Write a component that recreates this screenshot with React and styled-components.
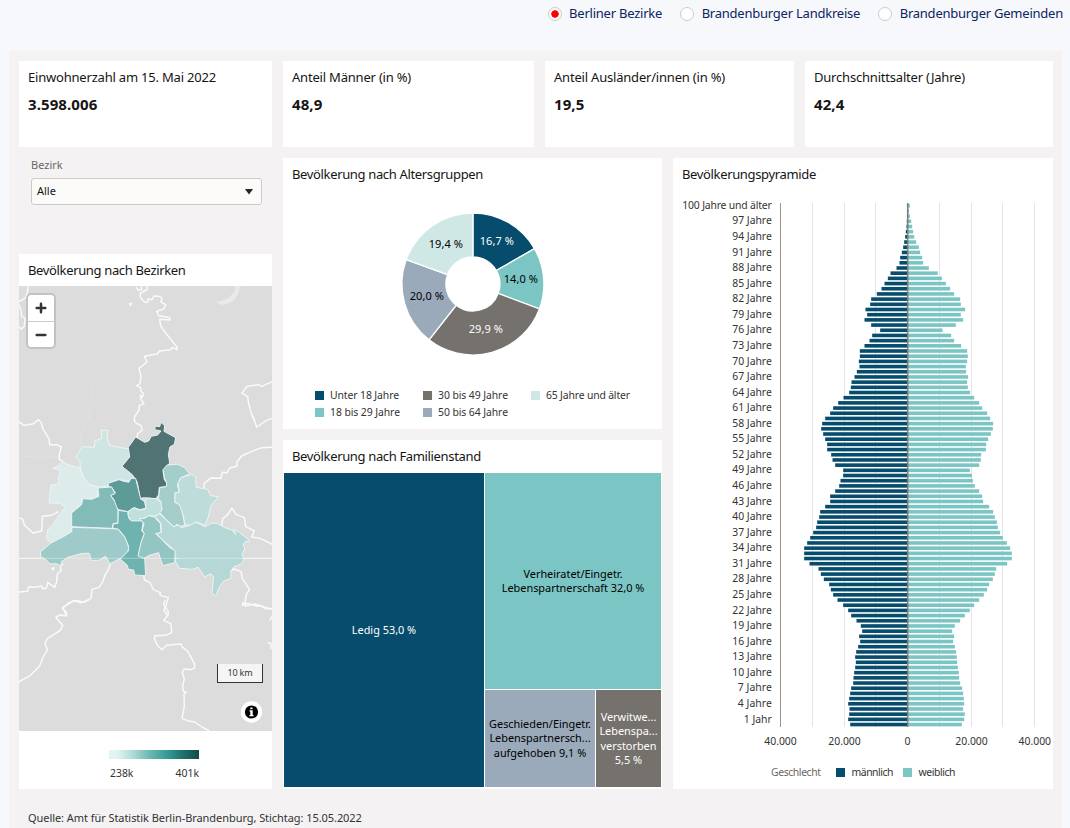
import React from "react";
import styled, { createGlobalStyle } from "styled-components";

const Global = createGlobalStyle`
  * { box-sizing: border-box; }
  html, body { margin: 0; height: 828px; overflow: hidden; }
  body { background: #f6f8fc; font-family: "Noto Sans", "Open Sans", sans-serif; color: #161513; }
`;

const navy = "#064c6c";
const teal = "#7bc6c4";
const grey = "#75716c";
const steel = "#9aaaba";
const mint = "#d0e8e5";

const Page = styled.div`
  height: 828px;
  width: 1070px;
  overflow: hidden;
`;

const Filters = styled.nav`
  height: 51px;
  display: flex;
  justify-content: flex-end;
  align-items: flex-start;
  padding: 3px 7px 0 0;
`;

const Option = styled.label`
  display: flex;
  align-items: center;
  height: 20px;
  margin-left: ${(p) => p.$gap || 0}px;
  font-size: 13px;
  letter-spacing: -0.23px;
  color: #0c2461;
  white-space: nowrap;
`;

const Radio = styled.span`
  width: 14px;
  height: 14px;
  margin: 2px 7.5px 0 0;
  border-radius: 50%;
  border: 1px solid #cbcbcb;
  background: ${(p) => (p.$on ? "radial-gradient(circle, #f00 0 3.4px, #fff 4px)" : "#fff")};
`;

const Board = styled.main`
  margin-left: 9px;
  width: 1053px;
  height: 777px;
  padding: 10px 9px 0 10px;
  background: #f4f2f3;
`;

const Kpis = styled.div`
  display: grid;
  grid-template-columns: 253px 251px 249px 248px;
  column-gap: 11px;
  height: 86px;
`;

const Kpi = styled.section`
  background: #fff;
  padding: 6px 9px;
`;

const Title = styled.h2`
  margin: 0;
  font-size: 13px;
  line-height: 20px;
  font-weight: 400;
  white-space: nowrap;
  letter-spacing: -0.2px;
`;

const Value = styled.div`
  margin-top: 7px;
  font-size: 15px;
  line-height: 20px;
  font-weight: 700;
  letter-spacing: 0.1px;
`;

const Columns = styled.div`
  display: grid;
  grid-template-columns: 253px 379px 380px;
  column-gap: 11px;
  margin-top: 11px;
  height: 631px;
`;

const Column = styled.div`
  display: flex;
  flex-direction: column;
`;

const Panel = styled.section`
  background: #fff;
  height: ${(p) => p.$h}px;
  padding-top: 6px;
  margin-top: ${(p) => p.$gap || 0}px;
`;

const PanelTitle = styled(Title)`
  padding-left: 9px;
  height: ${(p) => p.$h || 26}px;
  letter-spacing: -0.35px;
`;

const Field = styled.div`
  height: 96px;
  padding: 0 10px 0 12px;
`;

const FieldLabel = styled.div`
  font-size: 11px;
  height: 15px;
  line-height: 13px;
  color: #6b6763;
`;

const Select = styled.div`
  display: flex;
  align-items: center;
  justify-content: space-between;
  margin-top: 5px;
  height: 27px;
  padding: 0 8px 2px 5px;
  border: 1px solid #cdcbc6;
  border-radius: 3px;
  background: #fcfbfa;
  font-size: 11px;
`;

const Caret = styled.svg`
  margin-top: 2px;
`;

const MapArea = styled.div`
  position: relative;
  height: 445px;
  background: #dcdcdc;
  overflow: hidden;
`;

const ZoomBox = styled.div`
  position: absolute;
  left: 7px;
  top: 7px;
  width: 30px;
  height: 56px;
  border: 2px solid #c2c2c2;
  border-radius: 5px;
  background: #fff;
`;

const ZoomButton = styled.div`
  height: 26px;
  display: flex;
  align-items: center;
  justify-content: center;
  & + & { border-top: 1px solid #ccc; }
`;

const Scale = styled.div`
  position: absolute;
  left: 198px;
  top: 378px;
  width: 46px;
  height: 19px;
  border: 1px solid #333;
  border-top: 0;
  background: #f5f5f5;
  color: #333;
  font-size: 9px;
  letter-spacing: -0.2px;
  line-height: 18px;
  text-align: center;
`;

const Info = styled.div`
  position: absolute;
  left: 222px;
  top: 415px;
  width: 21px;
  height: 22px;
`;

const Ramp = styled.div`
  width: 90px;
  margin: 19px 0 0 90px;
  font-size: 10.4px;
  line-height: 14px;
  color: #333;
`;

const RampBar = styled.div`
  height: 9px;
  background: linear-gradient(90deg, #e2f5f5 0 8%, #b3ddd9 25%, #6db8b3 45%, #319895 66%, #217471 80%, #144a4b);
`;

const RampLabels = styled.div`
  display: flex;
  justify-content: space-between;
  margin: 7px 0 0 1px;
`;

const Tree = styled.div`
  display: flex;
  gap: 1px;
  height: 314px;
  margin: 1px 1px 0;
`;

const TreeStack = styled.div`
  display: grid;
  grid-template: 216px 97px / 110px 65px;
  gap: 1px;
`;

const Tile = styled.div`
  display: flex;
  flex-direction: column;
  align-items: center;
  justify-content: center;
  background: ${(p) => p.$bg};
  color: ${(p) => p.$fg || "#000"};
  grid-column: ${(p) => (p.$wide ? "1 / 3" : "auto")};
  width: ${(p) => (p.$w ? p.$w + "px" : "auto")};
  font-size: 10.9px;
  line-height: 14.5px;
  white-space: nowrap;
`;

const Source = styled.footer`
  margin: 20px 0 0 9px;
  font-size: 11px;
  letter-spacing: -0.06px;
  line-height: 18px;
  color: #333;
  white-space: nowrap;
`;

const Svg = styled.svg`
  display: block;
  font-size: ${(p) => p.$size || 10}px;
`;

const slices = [
  { share: 16.7, label: "16,7 %", color: navy, fg: "#fff", x: 213, y: 87 },
  { share: 14.0, label: "14,0 %", color: teal, fg: "#000", x: 237, y: 125 },
  { share: 29.9, label: "29,9 %", color: grey, fg: "#fff", x: 202, y: 175 },
  { share: 20.0, label: "20,0 %", color: steel, fg: "#000", x: 143, y: 142 },
  { share: 19.4, label: "19,4 %", color: mint, fg: "#000", x: 162, y: 90 },
];

const groups = [
  { x: 32, y: 233, text: "Unter 18 Jahre", color: navy, w: 69 },
  { x: 32, y: 250, text: "18 bis 29 Jahre", color: teal, w: 70 },
  { x: 140, y: 233, text: "30 bis 49 Jahre", color: grey, w: 70 },
  { x: 140, y: 250, text: "50 bis 64 Jahre", color: steel, w: 70 },
  { x: 248, y: 233, text: "65 Jahre und älter", color: mint, w: 84 },
];

function Donut() {
  const cx = 189.9, cy = 126, R = 71, r = 27;
  const pt = (rad, a) => `${cx + rad * Math.sin(a)} ${cy - rad * Math.cos(a)}`;
  let sum = 0;
  return (
    <Svg width="379" height="239" viewBox="0 32 379 239" $size={11}>
      {slices.map((s) => {
        const a = (sum / 100) * 2 * Math.PI;
        sum += s.share;
        const b = (sum / 100) * 2 * Math.PI;
        return (
          <path key={s.label} fill={s.color} stroke="#fff" strokeWidth="1.3"
            d={`M${pt(R, a)}A${R} ${R} 0 0 1 ${pt(R, b)}L${pt(r, b)}A${r} ${r} 0 0 0 ${pt(r, a)}Z`} />
        );
      })}
      {slices.map((s) => (
        <text key={s.label} x={s.x + 0.8} y={s.y} fill={s.fg} textAnchor="middle" textLength="34">{s.label}</text>
      ))}
      {groups.map((g) => (
        <g key={g.text}>
          <rect x={g.x} y={g.y} width="9" height="9" fill={g.color} />
          <text x={g.x + 15} y={g.y + 8} fontSize="10.4" fill="#333" textLength={g.w}>{g.text}</text>
        </g>
      ))}
    </Svg>
  );
}

// Bar lengths from age 100 down to 0, in units of 105 residents.
const men = [1,1,1.5,2,3,5,7,10,13,17,22,24,33,51,59,69,78,92,109,112,126,121,129,109,82,106,114,129,143,143,146,144,152,159,168,170,175,192,208,223,232,247,256,259,253,247,241,241,229,225,217,193,193,201,205,217,232,232,247,262,265,271,274,283,292,301,310,310,310,294,267,260,251,235,230,223,210,193,178,169,153,140,136,145,142,148,154,157,155,157,160,162,163,169,172,175,178,174,175,178,172];
const women = [7,4,7,11,14,17,20,26,34,38,44,47,64,91,103,115,128,140,158,160,173,160,167,145,105,131,140,161,179,181,179,175,176,182,179,181,188,200,215,224,239,248,257,256,250,242,236,235,221,220,215,187,193,196,202,215,224,227,245,257,262,268,271,278,286,298,308,313,313,299,266,262,256,245,239,229,215,200,187,172,158,142,134,140,137,142,146,148,149,151,154,155,158,164,167,169,170,167,172,170,163];

function Pyramid() {
  const zero = 234.5, step = 5.188;
  const mid = (i) => 45.1 + step * (i + 0.5);
  return (
    <Svg width="380" height="598" viewBox="0 33 380 598" $size={10.4} fill="#333">
      {[139.5, 171.5, 202.5, 266.5, 298.5, 329.5, 361.5].map((x) => (
        <path key={x} d={`M${x} 45V569`} stroke="#e4e5ea" />
      ))}
      <path d="M107.5 45V569" stroke="#969594" />
      {men.map((m, i) => (
        <g key={i}>
          <rect x={zero - m / 3} y={mid(i) - 1.75} width={m / 3} height="3.6" fill={navy} />
          <rect x={zero} y={mid(i) - 1.75} width={women[i] / 3} height="3.6" fill={teal} />
        </g>
      ))}
      <path d="M234.7 45V569" stroke="#75716c" strokeOpacity=".85" strokeWidth="1.6" />
      {men.map((_, i) => {
        if (i % 3) return null;
        const age = 100 - i;
        const text = age === 100 ? "100 Jahre und älter" : age === 1 ? "1 Jahr" : `${age} Jahre`;
        const w = age === 100 ? 89.5 : age === 1 ? 28 : age > 9 ? 39.5 : 34;
        return <text key={i} x="98.8" y={Math.round(mid(i) + 3.2)} textAnchor="end" textLength={w}>{text}</text>;
      })}
      {[["40.000", 107.5], ["20.000", 171.5], ["0", 234.5], ["20.000", 298.5], ["40.000", 361.8]].map(([t, x]) => (
        <text key={x} x={x} y="587" textAnchor="middle" textLength={t === "0" ? 6 : 32.5}>{t}</text>
      ))}
      <text x="98" y="618" fill="#6b6763" textLength="50">Geschlecht</text>
      <rect x="163" y="610" width="9" height="9" fill={navy} />
      <text x="178.5" y="618" textLength="42">männlich</text>
      <rect x="230" y="610" width="9" height="9" fill={teal} />
      <text x="245.5" y="618" textLength="37">weiblich</text>
    </Svg>
  );
}

const districts = [
  ["#ddeceb", "M112 162L130 152 141 140 162 150 196 158 202 182 222 208 248 216 248 244 231 252 202 251 199 268 171 293 170 348 158 362 144 364 131 379 106 383 94 370 99 342 114 330 133 299 151 276 134 265 102 264 108 210 130 207 131 186 136 166 120 161Z"],
  ["#cfe5e3", "M183 126L202 95 238 97 240 77 260 71 258 45 279 46 276 66 284 91 305 95 329 100 342 101 345 126 336 142 325 154 349 172 362 189 343 199 312 194 292 200 280 213 250 216 222 208 204 184 196 158 195 140Z"],
  ["#507473", "M340 97L362 66 389 82 401 78 409 64 428 60 438 48 419 44 421 33 434 35 438 22 449 32 447 49 482 68 478 88 465 96 460 118 464 144 444 168 448 194 456 205 454 215 433 217 431 239 422 252 388 248 375 250 370 218 366 200 352 179 321 154 344 126Z"],
  ["#5c9b98", "M280 205L312 194 326 199 341 202 349 190 362 190 370 223 377 252 389 260 393 280 374 284 357 278 338 290 311 284 300 274 298 256 287 241 301 233 289 216 280 215Z"],
  ["#82bbb8", "M170 294L200 269 203 251 230 253 252 244 249 219 290 216 300 236 287 241 299 260 309 286 309 323 294 326 292 340 239 338 170 335Z"],
  ["#9ecbc9", "M171 337L237 339 309 342 332 370 342 401 336 414 321 429 305 436 285 446 272 424 251 436 229 436 223 415 202 415 159 427 139 440 139 452 123 446 105 447 92 433 78 426 76 411 108 384 145 365 170 350Z"],
  ["#6fb3b1", "M310 286L338 290 342 311 354 318 375 309 384 324 380 348 388 355 378 384 371 421 389 428 392 482 359 480 356 465 340 463 337 451 316 432 340 408 341 394 329 365 310 342 294 340 294 327 309 325Z"],
  ["#c1dfdc", "M341 288L357 278 375 285 393 281 390 260 397 249 423 251 439 263 440 287 434 299 447 309 428 299 418 303 402 302 387 309 378 318 348 317 339 301Z"],
  ["#93c5c3", "M374 311L388 310 402 302 419 307 436 326 438 353 422 356 443 376 464 398 482 407 479 443 444 452 436 431 431 413 403 421 387 430 369 423 378 383 388 356 382 345 387 325Z"],
  ["#a4cecc", "M444 164L456 150 488 148 509 158 524 176 496 189 487 211 493 232 480 233 480 263 496 269 504 300 509 330 498 334 486 328 477 335 455 316 434 292 441 286 438 260 430 251 434 219 454 214 455 204 448 187Z"],
  ["#bddcda", "M489 203L499 188 530 178 542 187 544 217 578 223 587 242 611 245 588 272 580 306 570 331 543 320 532 332 510 329 505 302 494 270 480 261 480 234 493 231Z"],
  ["#b5d8d6", "M419 303L435 297 475 335 490 330 499 338 522 332 543 322 570 335 590 325 606 325 629 338 650 345 663 359 655 343 673 352 705 378 691 380 684 391 690 401 681 417 686 435 680 446 656 456 647 469 648 490 625 499 612 519 602 544 591 534 596 485 587 476 569 486 550 457 533 463 494 460 481 440 480 407 441 373 424 356 440 352 437 324Z"],
];

const northBorders = [
  "M40 108L36 132 30 145 10 155M12 164L18 180 20 200 30 204 28 229 19 238 12 230",
  "M364 111L370 121 379 119 380 108M395 108L398 117 383 126 376 130 376 142 389 157 399 157 398 147 411 149 417 138 433 139 441 144 438 156 452 164 446 177 425 184 431 197 464 203 466 210 434 208 437 228 450 247 474 276 486 291 487 299 472 292 467 299 434 303 427 312 388 319 396 336 372 355 378 380 375 401 365 407 377 413 378 424 386 431 382 442 376 435 377 447 387 460 373 467 372 480 359 500 358 512 364 520 378 526 382 540 367 552 366 567",
  "M343 159L346 166 351 158",
  "M772 395L740 409 730 404 697 409 681 429 698 440 700 457 710 494 719 512",
];

const southBorders = [
  "M11 20L27 31 56 26 70 14 79 23 82 38 92 55 102 71 104 89 124 89 139 96 133 119 133 134 145 139",
  "M11 308L23 312 28 330 54 354 80 348 82 304 110 301 130 290",
  "M712 0L725 36 755 16 772 10M566 219L568 205 587 189 618 190 622 172 636 173 644 159 665 154 666 141 680 123 710 109 740 98 772 97",
  "M620 331L623 311 637 300 651 279 664 299 688 308 692 334 718 348 710 366 735 370 772 388",
  "M286 447L280 464 270 480 264 499 252 517 231 523 228 550 200 563 175 557 144 578 153 599",
  "M386 482L389 495 406 503 414 523 436 533 435 541 460 548 452 575 447 586 457 600",
  "M645 468L658 462 678 470 682 490 704 524 694 538 690 563 682 570 700 565 725 574 735 572 752 581 772 581",
  "M11 531L37 529 41 515 59 517 81 513 82 521 94 519 98 502 119 517 125 500 127 478 139 466 136 449 145 448M109 461L117 458 113 466",
];

const bottomBorders = [
  "M222 0L205 7 187 1 163 8 142 24 155 38 154 48 135 45 122 52 143 76 136 91 98 115 90 129 97 150 83 174 74 198 44 228 10 246",
  "M450 0L446 14 460 35 459 46 446 61 468 71 470 98 452 106 420 107 418 115 427 136 441 149 455 136 499 132 501 140 519 155 539 193 539 204 527 209 507 207 502 217 508 237 503 259 505 274 513 276 507 283 508 320 501 355 517 362 539 366 561 381 582 392",
  "M681 8L692 18 720 12 740 18 750 22 772 27M758 129L768 130 768 148M764 62L772 49",
];

function BerlinMap() {
  return (
    <Svg width="253" height="445" fill="none" stroke="#fafafa" strokeWidth="4.4" strokeLinejoin="round">
      <g transform="translate(-4 -36) scale(.33333)">
        {northBorders.map((d) => <path key={d} d={d} />)}
        <path d="M602 155L622 165 653 155 669 134 676 109 662 108 656 128 640 144 620 153Z" fill="#e9e9e9" stroke="none" />
        <path d="M233 408L229 455 223 475 225 510" stroke="#e4e4e4" strokeWidth="2" />
      </g>
      <g transform="translate(-4 129) scale(.33333)">
        {southBorders.map((d) => <path key={d} d={d} />)}
        <path d="M225 2L207 27 195 71 196 94M12 121L60 128 130 126" stroke="#e4e4e4" strokeWidth="2" />
        {districts.map(([color, d]) => <path key={color} d={d} fill={color} stroke="#edf5f4" strokeWidth="2.8" />)}
        <path d="M12 430H78M485 430H490M687 430H772" strokeWidth="3" />
        <path d="M80 430H685" stroke="#fff" strokeOpacity=".35" strokeWidth="3" />
      </g>
      <g transform="translate(-4 314) scale(.33333)">
        {bottomBorders.map((d) => <path key={d} d={d} />)}
      </g>
    </Svg>
  );
}

const kpis = [
  ["Einwohnerzahl am 15. Mai 2022", "3.598.006"],
  ["Anteil Männer (in %)", "48,9"],
  ["Anteil Ausländer/innen (in %)", "19,5"],
  ["Durchschnittsalter (Jahre)", "42,4"],
];

export default function App() {
  return (
    <Page>
      <Global />
      <Filters>
        <Option><Radio $on />Berliner Bezirke</Option>
        <Option $gap={18}><Radio />Brandenburger Landkreise</Option>
        <Option $gap={18}><Radio />Brandenburger Gemeinden</Option>
      </Filters>
      <Board>
        <Kpis>
          {kpis.map(([title, value]) => (
            <Kpi key={title}>
              <Title>{title}</Title>
              <Value>{value}</Value>
            </Kpi>
          ))}
        </Kpis>
        <Columns>
          <Column>
            <Field>
              <FieldLabel>Bezirk</FieldLabel>
              <Select>
                Alle
                <Caret width="8" height="6"><path d="M0 0H8L4 5.5Z" fill="#272522" /></Caret>
              </Select>
            </Field>
            <Panel $h={535}>
              <PanelTitle>Bevölkerung nach Bezirken</PanelTitle>
              <MapArea>
                <BerlinMap />
                <ZoomBox>
                  <ZoomButton><svg width="12" height="12"><path d="M6 1.7V10.3M1.7 6H10.3" stroke="#333" strokeWidth="2.5" strokeLinecap="round" /></svg></ZoomButton>
                  <ZoomButton><svg width="12" height="12"><path d="M1.7 6H10.3" stroke="#333" strokeWidth="2.5" strokeLinecap="round" /></svg></ZoomButton>
                </ZoomBox>
                <Scale>10 km</Scale>
                <Info>
                  <svg width="21" height="22" viewBox="0 0 21 22">
                    <circle cx="10.5" cy="11" r="10.7" fill="#fff" />
                    <circle cx="10.5" cy="11" r="6.6" fill="#000" />
                    <path d="M9.3 6.4H11.5V8.3H9.3ZM8.5 9.3H11.7V14H12.6V15.2H8.4V14H9.3V10.5H8.5Z" fill="#fff" />
                  </svg>
                </Info>
              </MapArea>
              <Ramp>
                <RampBar />
                <RampLabels><span>238k</span><span>401k</span></RampLabels>
              </Ramp>
            </Panel>
          </Column>
          <Column>
            <Panel $h={271}>
              <PanelTitle>Bevölkerung nach Altersgruppen</PanelTitle>
              <Donut />
            </Panel>
            <Panel $h={349} $gap={11}>
              <PanelTitle>Bevölkerung nach Familienstand</PanelTitle>
              <Tree>
                <Tile $bg={navy} $fg="#fff" $w={200}>Ledig 53,0 %</Tile>
                <TreeStack>
                  <Tile $bg={teal} $wide>
                    <span>Verheiratet/Eingetr.</span>
                    <span>Lebenspartnerschaft 32,0 %</span>
                  </Tile>
                  <Tile $bg={steel}>
                    <span>Geschieden/Eingetr.</span>
                    <span>Lebenspartnersch...</span>
                    <span>aufgehoben 9,1 %</span>
                  </Tile>
                  <Tile $bg={grey} $fg="#fff">
                    <span>Verwitwe...</span>
                    <span>Lebenspa...</span>
                    <span>verstorben</span>
                    <span>5,5 %</span>
                  </Tile>
                </TreeStack>
              </Tree>
            </Panel>
          </Column>
          <Panel $h={631}>
            <PanelTitle $h={27}>Bevölkerungspyramide</PanelTitle>
            <Pyramid />
          </Panel>
        </Columns>
        <Source>Quelle: Amt für Statistik Berlin-Brandenburg, Stichtag: 15.05.2022</Source>
      </Board>
    </Page>
  );
}
